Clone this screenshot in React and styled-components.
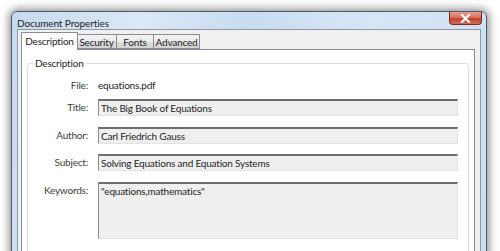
import React from "react";
import styled, { createGlobalStyle } from "styled-components";

const Global = createGlobalStyle`
  body {
    margin: 0;
    background: #ffffff;
    font-family: Lato, "Open Sans", sans-serif;
    font-size: 10px;
    letter-spacing: -0.2px;
    color: #000;
  }
`;

const Page = styled.div`
  width: 500px;
  height: 251px;
  overflow: hidden;
  padding: 11px 0 0 11px;
  box-sizing: border-box;
`;

const Window = styled.div`
  width: 476px;
  height: 260px;
  box-sizing: border-box;
  border: 1px solid #4f5966;
  border-radius: 6px 6px 0 0;
  background: linear-gradient(100deg, #c6daee 0%, #dbe8f6 25%, #c9dcf0 45%, #d7e6f5 70%, #cddff2 100%);
  box-shadow: 0 0 9px 2px rgba(0, 0, 0, 0.45);
  display: flex;
  flex-direction: column;
  padding: 0 5px;
`;

const TitleBar = styled.div`
  height: 20px;
  display: flex;
  justify-content: space-between;
  align-items: flex-start;
`;

const Title = styled.div`
  padding: 5px 0 0 0;
  font-size: 10px;
  line-height: 12px;
  letter-spacing: -0.1px;
  color: #1e1e1e;
`;

const Close = styled.div`
  width: 33px;
  height: 13px;
  margin-right: -1px;
  border: 1px solid #7a2b23;
  border-top: none;
  border-radius: 0 0 4px 4px;
  background: linear-gradient(180deg, #e4a092 0%, #d8735f 45%, #c2432d 55%, #d56b52 100%);
  display: flex;
  align-items: center;
  justify-content: center;
  box-sizing: border-box;
`;

const Client = styled.div`
  flex: 1;
  background: #f0f0f0;
  border: 1px solid #8c9aa8;
  border-bottom: none;
  padding: 2px 5px 0 3px;
  display: flex;
  flex-direction: column;
`;

const TabRow = styled.div`
  display: flex;
  align-items: flex-end;
  height: 17px;
  position: relative;
  z-index: 1;
`;

const Tab = styled.div`
  box-sizing: border-box;
  width: ${(p) => p.$w}px;
  height: ${(p) => (p.$active ? "18px" : "15px")};
  padding-top: ${(p) => (p.$active ? "2px" : "1px")};
  margin: ${(p) => (p.$active ? "0 -1px -1px 0" : "0 0 0 -1px")};
  border: 1px solid #898c95;
  border-bottom: ${(p) => (p.$active ? "none" : "1px solid #898c95")};
  background: ${(p) =>
    p.$active ? "#ffffff" : "linear-gradient(180deg, #f3f3f3 0%, #ebebeb 50%, #dedede 51%, #d2d2d2 100%)"};
  font-size: 10px;
  line-height: 12px;
  text-align: center;
  color: #1e1e1e;
  position: relative;
  z-index: ${(p) => (p.$active ? 2 : 1)};
  &:first-child {
    margin-left: 0;
  }
`;

const Panel = styled.div`
  flex: 1;
  background: #ffffff;
  border: 1px solid #898c95;
  padding: 7px 5px 0 5px;
`;

const Group = styled.fieldset`
  margin: 0;
  padding: 8px 10px 10px 0;
  border: 1px solid #d5dfe5;
  border-radius: 3px;
  height: 220px;
  box-sizing: border-box;
`;

const Legend = styled.legend`
  padding: 0 2px;
  margin-left: 5px;
  font-size: 10px;
  line-height: 12px;
  color: #1e1e1e;
`;

const Fields = styled.div`
  display: flex;
  flex-direction: column;
`;

const Row = styled.div`
  display: grid;
  grid-template-columns: 60px 1fr;
  column-gap: 10px;
  align-items: start;
  margin-bottom: ${(p) => p.$gap}px;
`;

const Label = styled.div`
  text-align: right;
  color: #3c3c3c;
  font-size: 10px;
  line-height: 17px;
`;

const Value = styled.div`
  font-size: 10px;
  line-height: 17px;
  color: #1e1e1e;
`;

const Input = styled.div`
  box-sizing: border-box;
  height: ${(p) => p.$h || 17}px;
  background: #efefef;
  border-top: 2px solid #6e6e6e;
  border-left: 1px solid #8c8c8c;
  border-right: 1px solid #e2e2e2;
  border-bottom: 1px solid #e2e2e2;
  padding: 1px 2px 0;
  font-size: 10px;
  line-height: 12px;
  color: #1e1e1e;
  white-space: nowrap;
  overflow: hidden;
`;

const CloseIcon = () => (
  <svg width="11" height="9" viewBox="0 0 11 9">
    <path d="M2 1 L9 8 M9 1 L2 8" stroke="#ffffff" strokeWidth="2.2" strokeLinecap="square" />
  </svg>
);

export default function App() {
  return (
    <Page>
      <Global />
      <Window>
        <TitleBar>
          <Title>Document Properties</Title>
          <Close>
            <CloseIcon />
          </Close>
        </TitleBar>
        <Client>
          <TabRow>
            <Tab $active $w={57}>Description</Tab>
            <Tab $w={41}>Security</Tab>
            <Tab $w={38}>Fonts</Tab>
            <Tab $w={47}>Advanced</Tab>
          </TabRow>
          <Panel>
            <Group>
              <Legend>Description</Legend>
              <Fields>
                <Row $gap={5}>
                  <Label>File:</Label>
                  <Value>equations.pdf</Value>
                </Row>
                <Row $gap={11}>
                  <Label>Title:</Label>
                  <Input>The Big Book of Equations</Input>
                </Row>
                <Row $gap={10}>
                  <Label>Author:</Label>
                  <Input>Carl Friedrich Gauss</Input>
                </Row>
                <Row $gap={11}>
                  <Label>Subject:</Label>
                  <Input>Solving Equations and Equation Systems</Input>
                </Row>
                <Row $gap={0}>
                  <Label>Keywords:</Label>
                  <Input $h={57}>"equations,mathematics"</Input>
                </Row>
              </Fields>
            </Group>
          </Panel>
        </Client>
      </Window>
    </Page>
  );
}
